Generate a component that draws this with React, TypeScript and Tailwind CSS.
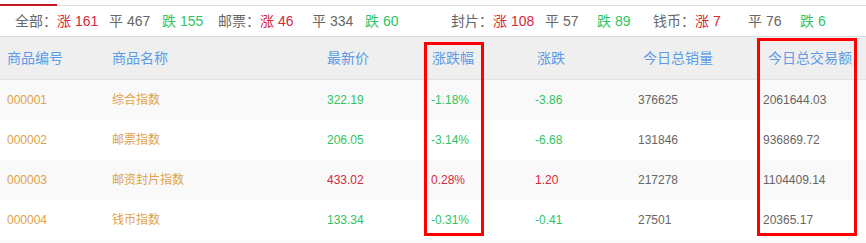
import React from "react";

const font = { fontFamily: '"Liberation Sans", "Noto Sans CJK SC", sans-serif' };

const stats = [
  { label: "全部：", up: "161", uw: "w-[52px]", flat: "467", fw: "w-[53px]", down: "155", dw: "w-[56px]" },
  { label: "邮票：", up: "46", uw: "w-[52px]", flat: "334", fw: "w-[53px]", down: "60", dw: "w-[86px]" },
  { label: "封片：", up: "108", uw: "w-[52px]", flat: "57", fw: "w-[52px]", down: "89", dw: "w-[56px]" },
  { label: "钱币：", up: "7", uw: "w-[53px]", flat: "76", fw: "w-[52px]", down: "6", dw: "w-[50px]" },
];

const rows = [
  { code: "000001", name: "综合指数", price: "322.19", pct: "-1.18%", chg: "-3.86", vol: "376625", amt: "2061644.03", up: false },
  { code: "000002", name: "邮票指数", price: "206.05", pct: "-3.14%", chg: "-6.68", vol: "131846", amt: "936869.72", up: false },
  { code: "000003", name: "邮资封片指数", price: "433.02", pct: "0.28%", chg: "1.20", vol: "217278", amt: "1104409.14", up: true },
  { code: "000004", name: "钱币指数", price: "133.34", pct: "-0.31%", chg: "-0.41", vol: "27501", amt: "20365.17", up: false },
];

const cols = "grid grid-cols-[105px_215px_104px_104px_103px_125px_1fr] pl-[7px] items-center";

export default function App() {
  return (
    <div className="relative w-[866px] h-[243px] overflow-hidden bg-white" style={font}>
      <div className="pt-[4px]">
        <div className="flex h-[2px]">
          <div className="w-[57px] h-[2px] bg-[#c9151e]" />
          <div className="flex-1 border-b border-[#dddddd]" />
        </div>
      </div>

      <div className="flex items-center h-[31px] pl-[15px] text-[14px] text-[#666] border-b border-[#dddddd] whitespace-nowrap">
        {stats.map((s) => (
          <React.Fragment key={s.label}>
            <span className="w-[42px] shrink-0">{s.label}</span>
            <span className={`${s.uw} shrink-0 text-[#d8283a]`}>涨 {s.up}</span>
            <span className={`${s.fw} shrink-0`}>平 {s.flat}</span>
            <span className={`${s.dw} shrink-0 text-[#2fc463]`}>跌 {s.down}</span>
          </React.Fragment>
        ))}
      </div>

      <div className={`${cols} h-[43px] bg-[#efefef] border-b border-[#e3e3e3] text-[14px] text-[#5b9be8]`}>
        <span>商品编号</span>
        <span>商品名称</span>
        <span>最新价</span>
        <span className="pl-[1px]">涨跌幅</span>
        <span className="pl-[2px]">涨跌</span>
        <span className="pl-[5px]">今日总销量</span>
        <span className="pl-[5px]">今日总交易额</span>
      </div>

      {rows.map((r, i) => {
        const c = r.up ? "text-[#d8283a]" : "text-[#2fc463]";
        return (
          <div key={r.code} className={`${cols} h-[40px] text-[12px] ${i % 2 === 0 ? "bg-[#f9f9f9]" : "bg-white"}`}>
            <span className="text-[#e0a24a]">{r.code}</span>
            <span className="text-[#e0a24a]">{r.name}</span>
            <span className={c}>{r.price}</span>
            <span className={c}>{r.pct}</span>
            <span className={c}>{r.chg}</span>
            <span className="text-[#666]">{r.vol}</span>
            <span className="text-[#666]">{r.amt}</span>
          </div>
        );
      })}
      <div className="h-[40px] bg-[#f9f9f9]" />

      <div className="absolute left-[424px] top-[42px] w-[60px] h-[194px] border-[3px] border-[#ff0000]" />
      <div className="absolute left-[757px] top-[38px] w-[100px] h-[198px] border-[3px] border-[#ff0000]" />
    </div>
  );
}
